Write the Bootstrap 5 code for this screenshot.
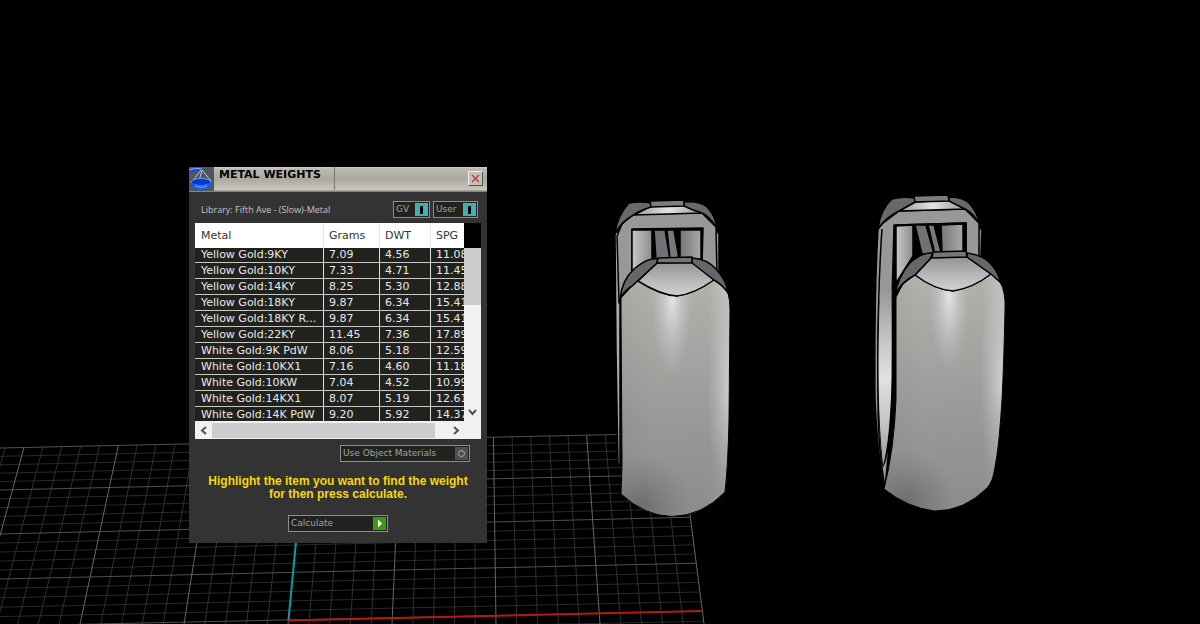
<!DOCTYPE html>
<html lang="en">
<head>
<meta charset="utf-8">
<meta name="viewport" content="width=device-width, initial-scale=1">
<title>Metal Weights</title>
<link href="https://cdn.jsdelivr.net/npm/bootstrap@5.3.0/dist/css/bootstrap.min.css" rel="stylesheet">
<style>
body{background:#000;font-family:"Liberation Sans",sans-serif;min-height:100vh}
.viewport3d{min-height:100vh}
.scene{inset:0;width:100%;height:100%}
.tool-window{left:189px;top:167px;width:298px;background:#333;color:#c4c4c4;font:9px/12px "Open Sans",sans-serif;padding-bottom:11px}
.title-strip{height:25px;background:linear-gradient(#d0cfc8 0,#bbb9b1 2px,#aaa89f 12px,#c3c1b8 21px,#c8c6be 23px,#85847d 24px)}
.title-strip h1{width:121px;height:23px;font:bold 11px/15px "DejaVu Sans",sans-serif;color:#000;padding-left:5px;border-right:1px solid #777770}
.close-btn{width:15px;height:15px;background:#c4c2b8;border:1px solid;border-color:#eee #555 #555 #eee;margin-right:4px}
.lib-line{padding:9px 9px 5px 12px}
.field{height:17px;background:#22221e;border:1px solid #8c8c8c;color:#a2a2a2;padding:0 1px 0 2px;font:9px/15px "DejaVu Sans",sans-serif}
.field input{appearance:none;margin:0;width:13px;height:13px}
.field input.sw{background:linear-gradient(#000,#000) center/3px 8px no-repeat #44b0b1}
.field .ring-box{background:#505050}
.field .ring-box::before{content:"";display:block;width:7px;height:7px;margin:3px;border:1px solid #aaa;border-radius:50%}
.gv{width:37px}
.user{width:45px;margin-left:3px}
.use-mat{width:130px}
.calc{width:100px}
.weights{margin:0 6px;background:#f1f1f1}
.grid-clip{overflow:hidden;height:198px;background:#000}
.weights table{table-layout:fixed;width:303px;border-collapse:separate;border-spacing:0;font:11px/15px "DejaVu Sans",sans-serif;color:#e8e8e8}
.weights th{height:25px;background:#fff;color:#333;font-weight:400;border-right:1px solid #e5e5e5;padding:0 0 0 6px}
.weights td{height:16px;line-height:15px;background:#21221e;border-right:1px solid #ddd;border-bottom:1px solid #c8c8c8;padding:0 0 0 6px;white-space:nowrap;overflow:hidden}
.weights tbody tr:first-child td{height:15px;line-height:14px}
.weights td+td,.weights th+th{padding-left:5px}
.vbar{width:17px;background:linear-gradient(#000 25px,#cdcdcd 25px,#cdcdcd 82px,#f1f1f1 82px)}
.hbar{height:18px;background:#f1f1f1}
.hthumb{width:223px;height:15px;background:#cdcdcd}
.arrow{border:0;background:none;padding:0;width:17px;height:17px;line-height:0}
.mat-line{padding:6px 17px 0 0}
.hint{color:#f5d90a;font:bold 12px/13px "Liberation Sans",sans-serif;margin:13px 0 14px}
</style>
</head>
<body>
<main class="viewport3d position-relative overflow-hidden">
<svg class="scene position-absolute" viewBox="0 0 1200 624" preserveAspectRatio="xMinYMin slice" aria-hidden="true">
<defs>
<linearGradient id="metal"><stop offset="0" stop-color="#a9a8a5"/><stop offset=".3" stop-color="#b1b0ad"/><stop offset=".8" stop-color="#b0afac"/><stop offset="1" stop-color="#c4c3c0"/></linearGradient>
<linearGradient id="shade" x2="0" y2="1"><stop offset="0" stop-color="#666" stop-opacity="0"/><stop offset=".6" stop-color="#686868" stop-opacity=".33"/><stop offset="1" stop-color="#555" stop-opacity=".4"/></linearGradient>
<radialGradient id="glow"><stop offset="0" stop-color="#f0efec" stop-opacity=".85"/><stop offset=".5" stop-color="#ddd" stop-opacity=".4"/><stop offset="1" stop-color="#ccc" stop-opacity="0"/></radialGradient>
<radialGradient id="dim"><stop offset="0" stop-color="#555" stop-opacity=".55"/><stop offset="1" stop-color="#666" stop-opacity="0"/></radialGradient>
<linearGradient id="facet" x2="0" y2="1"><stop offset="0" stop-color="#939396"/><stop offset=".6" stop-color="#bcbcbf"/><stop offset="1" stop-color="#d0d0d2"/></linearGradient>
<linearGradient id="inner"><stop offset="0" stop-color="#c8c8c6"/><stop offset="1" stop-color="#8d8d8b"/></linearGradient>
<linearGradient id="inner2"><stop offset="0" stop-color="#777775"/><stop offset="1" stop-color="#aaa"/></linearGradient>
<linearGradient id="strip"><stop offset="0" stop-color="#999"/><stop offset=".5" stop-color="#e4e4e2"/><stop offset="1" stop-color="#999"/></linearGradient>
<linearGradient id="hollow" x2="0" y2="1"><stop offset="0" stop-color="#979795"/><stop offset=".25" stop-color="#c0c0be"/><stop offset=".5" stop-color="#e2e2df"/><stop offset=".75" stop-color="#c4c4ca"/><stop offset="1" stop-color="#999"/></linearGradient>
<clipPath id="bodyA"><path id="pa" d="M621 298L632 286L638 281Q660 295 677 296Q694 294 714 280Q724 286 728 293Q730 300 730 310L729 420Q728 466 725 492Q702 516 672 516.500Q645 516 621 494L622 465L621 310Z"/></clipPath>
<clipPath id="bodyB"><path id="pb" d="M896 297L903 284L915 275Q935 290 953 291Q973 288 991 274L1000 282Q1006 292 1005 310Q1004 360 1002 400Q999 448 995 467Q993 482 987 488Q964 511 935 511Q908 508 884 489Q894 450 896 400Z"/></clipPath>
</defs>
<g id="floor" fill="none"></g>
<path d="M701.500 611L288 620.500" stroke="#b51b0b" stroke-width="2"/>
<path d="M298 520L288.500 620" stroke="#079da3" stroke-width="2"/>

<!-- left band -->
<g stroke="#000" stroke-width="1.500" stroke-linejoin="round">
<path d="M615 233L618 230L620 300L620 465L618 464L616 350Z" fill="#aaa"/>
<path d="M715 228L719 234L719 275L715 270Z" fill="#a0a09f"/>
<path d="M617 236L622 224L634 214L702 213L716 227L717 275L700 265H635L619 303Z" fill="#989896"/>
<path d="M632 229L703 228L702 265L632 272Z" fill="#000"/>
<path d="M632 230L652 230L652 262L632 272Z" fill="url(#inner)"/>
<path d="M654 230H665L670 259H656Z" fill="#707174"/><path d="M667 230H674L679 259H670Z" fill="#77787b"/>
<path d="M680 230H701V266L680 259Z" fill="url(#inner2)"/>
<path d="M651 206L684 205L702 213L634 215Z" fill="url(#strip)"/>
<path d="M615 234Q617 216 629 203Q642 201 651 203L651 207Q638 211 632 216Q621 222 615 234Z" fill="#68696c"/>
<path d="M684 202Q700 201 707 207Q715 215 717 228Q710 217 702 213Q692 210 684 206Z" fill="#68696c"/>
<path d="M650 201L684 200L684 206L651 207Z" fill="#7d7e80"/>
</g>
<use href="#pa" fill="url(#metal)"/>
<g clip-path="url(#bodyA)"><rect x="615" y="290" width="120" height="230" fill="url(#shade)"/><ellipse cx="672" cy="298" rx="20" ry="78" fill="url(#glow)"/><ellipse cx="729" cy="390" rx="22" ry="100" fill="url(#glow)" opacity=".6"/><ellipse cx="642" cy="505" rx="50" ry="50" fill="url(#dim)"/></g>
<use href="#pa" fill="none" stroke="#000"/>
<g stroke="#000" stroke-width="1.500" stroke-linejoin="round">
<path d="M657 263L692 262L714 280Q694 294 677 296Q660 295 638 281Z" fill="url(#facet)"/>
<path d="M620 299Q622 280 634 269Q648 257 658 259L657 263L632 286Q624 291 620 299Z" fill="#66676a"/>
<path d="M692 258Q707 259 716 269Q727 281 728 293Q723 285 714 280L692 263Z" fill="#66676a"/>
<path d="M658 258L692 257L692 263L657 263Z" fill="#747578"/>
</g>

<!-- right band -->
<g stroke="#000" stroke-width="1.500" stroke-linejoin="round">
<path d="M978 225L982 230L981 258L978 257Z" fill="#888"/>
<path d="M878 229L882 224L899 211L965 209L979 223L979 262L965 255L920 250L897 290L897 400Q896 455 884 488Q877 450 875 400Q874 300 878 229Z" fill="#989896"/>
<path d="M896 225L966 223V258L930 258L897 290Q900 430 885 487Q878 450 878 400Q877 300 882 229" fill="none"/>
<path d="M879 300Q876 400 883 466Q889 455 892 400L894 225H896L966 223V258L925 260L897 290Q900 430 885 488Q895 400 892 300L895 226H894L892 300Q894 430 883 466Q876 400 879 300Z" fill="#000"/>
<path d="M880 290Q876 400 883 466Q890 440 891.500 380V290Z" fill="url(#hollow)" stroke="none"/>
<path d="M896 226L913 225V256L896 283Z" fill="url(#inner)"/>
<path d="M915 225H926L934 254H922Z" fill="#707174"/><path d="M928 225H934L941 252L935 254Z" fill="#77787b"/>
<path d="M941 225L963 224V257L942 253Z" fill="url(#inner2)"/>
<path d="M915 202L949 200L965 209L899 211Z" fill="url(#strip)"/>
<path d="M878 229Q880 210 892 199Q902 196 915 198V202L899 211Q885 218 878 229Z" fill="#68696c"/>
<path d="M949 197Q963 197 969 203Q978 213 979 223Q973 213 965 209L949 201Z" fill="#68696c"/>
<path d="M914 196L948 195L949 201L915 202Z" fill="#7d7e80"/>
</g>
<use href="#pb" fill="url(#metal)"/>
<g clip-path="url(#bodyB)"><rect x="880" y="285" width="130" height="230" fill="url(#shade)"/><ellipse cx="949" cy="295" rx="20" ry="76" fill="url(#glow)"/><ellipse cx="1001" cy="380" rx="22" ry="100" fill="url(#glow)" opacity=".6"/><ellipse cx="906" cy="500" rx="50" ry="50" fill="url(#dim)"/></g>
<use href="#pb" fill="none" stroke="#000"/>
<g stroke="#000" stroke-width="1.500" stroke-linejoin="round">
<path d="M932 257L967 257L991 274Q973 288 953 291Q935 290 915 275Z" fill="url(#facet)"/>
<path d="M895 295Q898 277 909 264Q921 252 933 253L930 259L915 275Q901 282 895 295Z" fill="#66676a"/>
<path d="M967 253Q983 255 991 264Q999 273 1000 282L991 274L967 257Z" fill="#66676a"/>
<path d="M933 252L966 251L967 257L932 258Z" fill="#747578"/>
</g>
</svg>

<section class="tool-window position-absolute" aria-label="Metal weights">
<header class="title-strip d-flex">
<svg width="25" height="24" viewBox="0 0 25 24" aria-hidden="true"><rect width="25" height="24" fill="#54565c"/><path d="M0 3Q7 0 14 1L13 5Q6 3 0 7Z" fill="#1c49e8"/><path d="M0 3Q7 0 13 2" stroke="#8fb4ff" fill="none"/><path d="M12 3L3 15M13 3L9 18M13 3L22 14" stroke="#a8c9f2" fill="none"/><ellipse cx="12" cy="15" rx="10" ry="3.500" fill="#0d35c9" stroke="#58a7ff"/><path d="M1 15Q3 23 12 23Q21 23 23 15Q12 22 1 15Z" fill="#1459f0"/><path d="M6 19Q12 22 18 19" stroke="#69b8ff" fill="none"/></svg>
<h1 class="m-0">METAL WEIGHTS</h1>
<button class="close-btn p-0 ms-auto lh-1 mt-1 d-flex align-items-center justify-content-center" aria-label="Close"><svg width="9" height="9" viewBox="0 0 9 9"><path d="M1 1L8 8M8 1L1 8" stroke="#d0303a" stroke-width="1.300"/></svg></button>
</header>
<div class="lib-line d-flex align-items-center">
<span class="me-auto">Library: Fifth Ave - (Slow)-Metal</span>
<label class="field gv d-flex align-items-center justify-content-between">GV<input class="sw" type="checkbox" checked></label>
<label class="field user d-flex align-items-center justify-content-between">User<input class="sw" type="checkbox" checked></label>
</div>
<div class="weights">
<div class="d-flex">
<div class="grid-clip flex-fill">
<table>
<colgroup><col style="width:129px"><col style="width:56px"><col style="width:51px"><col></colgroup>
<thead><tr><th>Metal</th><th>Grams</th><th>DWT</th><th>SPG</th></tr></thead>
<tbody>
<tr><td>Yellow Gold:9KY</td><td>7.09</td><td>4.56</td><td>11.08</td></tr>
<tr><td>Yellow Gold:10KY</td><td>7.33</td><td>4.71</td><td>11.45</td></tr>
<tr><td>Yellow Gold:14KY</td><td>8.25</td><td>5.30</td><td>12.88</td></tr>
<tr><td>Yellow Gold:18KY</td><td>9.87</td><td>6.34</td><td>15.41</td></tr>
<tr><td>Yellow Gold:18KY R...</td><td>9.87</td><td>6.34</td><td>15.41</td></tr>
<tr><td>Yellow Gold:22KY</td><td>11.45</td><td>7.36</td><td>17.89</td></tr>
<tr><td>White Gold:9K PdW</td><td>8.06</td><td>5.18</td><td>12.59</td></tr>
<tr><td>White Gold:10KX1</td><td>7.16</td><td>4.60</td><td>11.18</td></tr>
<tr><td>White Gold:10KW</td><td>7.04</td><td>4.52</td><td>10.99</td></tr>
<tr><td>White Gold:14KX1</td><td>8.07</td><td>5.19</td><td>12.61</td></tr>
<tr><td>White Gold:14K PdW</td><td>9.20</td><td>5.92</td><td>14.37</td></tr>
</tbody>
</table>
</div>
<div class="vbar d-flex flex-column justify-content-end flex-shrink-0"><button class="arrow" aria-label="Scroll down"><svg width="9" height="7" viewBox="0 0 9 7"><path d="M1 1L4.500 5L8 1" fill="none" stroke="#505050" stroke-width="2"/></svg></button></div>
</div>
<div class="hbar d-flex align-items-center">
<button class="arrow" aria-label="Scroll left"><svg width="7" height="9" viewBox="0 0 7 9"><path d="M6 1L2 4.500L6 8" fill="none" stroke="#505050" stroke-width="2"/></svg></button>
<div class="hthumb"></div>
<button class="arrow ms-auto me-3" aria-label="Scroll right"><svg width="7" height="9" viewBox="0 0 7 9"><path d="M1 1L5 4.500L1 8" fill="none" stroke="#505050" stroke-width="2"/></svg></button>
</div>
</div>
<div class="mat-line d-flex justify-content-end"><label class="field use-mat d-flex align-items-center justify-content-between">Use Object Materials<input class="ring-box" type="checkbox"></label></div>
<p class="hint text-center">Highlight the item you want to find the weight<br>for then press calculate.</p>
<div class="d-flex justify-content-center"><button class="field calc d-flex align-items-center justify-content-between">Calculate<svg width="13" height="13" viewBox="0 0 13 13"><rect width="13" height="13" fill="#3b9a12"/><path d="M5 2.500L9 6.500L5 10.500Z" fill="#fff"/></svg></button></div>
</section>
</main>
<script>
// Floor grid: five minor cells to each major one, in mild perspective
const floor = document.getElementById('floor');
const rowsL = [448, 490, 534, 579, 626, 674], rowsR = [434.5, 476, 519, 565, 613, 663];
let minorH = '', majorH = '', minorV = '', majorV = '';
const mix = (a, b, t) => a + (b - a) * t;
const edgeX = y => 680 + (y - 437) * 23 / 187;
for (let r = 0; r < 5; r++) for (let s = 0; s < 5; s++) {
  const yl = mix(rowsL[r], rowsL[r + 1], s / 5), yr = mix(rowsR[r], rowsR[r + 1], s / 5);
  const x = edgeX(yr), d = `M0 ${yl}L${x} ${mix(yl, yr, x / 617)}`;
  if (s) minorH += d; else majorH += d;
}
for (let k = -5; k <= 35; k++) {
  const i = k / 5, x0 = 26 + 93.5 * i, x1 = -24 + 104 * i;
  const top = 448 - x0 * 13.5 / 617;
  const d = `M${mix(x0, x1, (top - 440) / 184)} ${top}L${x1} 624`;
  if (k % 5) minorV += d; else majorV += d;
}
floor.innerHTML = `<path d="${minorH}" stroke="#292929"/><path d="${minorV}" stroke="#303030"/><path d="${majorH}" stroke="#505050"/><path d="${majorV}" stroke="#666"/>`;
</script>
<script src="https://cdn.jsdelivr.net/npm/bootstrap@5.3.0/dist/js/bootstrap.bundle.min.js"></script>
</body>
</html>
